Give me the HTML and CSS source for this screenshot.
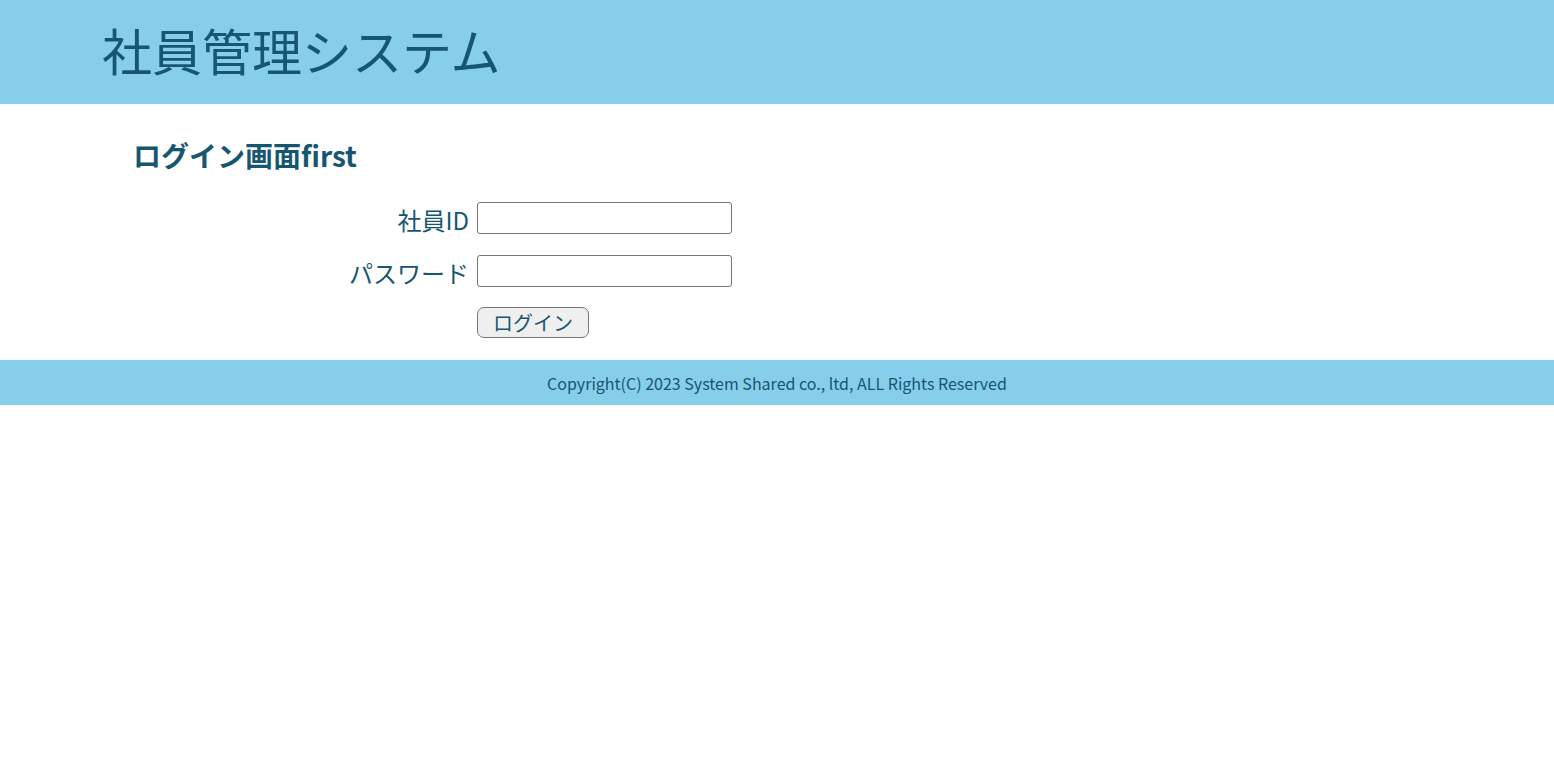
FILE: index.html
```html
<!DOCTYPE html>
<html lang="ja">
<head>
<meta charset="utf-8">
<title>社員管理システム</title>
<link rel="stylesheet" href="styles.css">
</head>
<body>
<header class="site-header">
  <h1 class="site-title">社員管理システム</h1>
</header>
<main class="main">
  <h2 class="page-title">ログイン画面first</h2>
  <form class="login-form">
    <label class="field-label" for="empId">社員ID</label>
    <input class="field-input" id="empId" type="text">
    <label class="field-label" for="pw">パスワード</label>
    <input class="field-input" id="pw" type="password">
    <span></span>
    <div class="actions"><button class="login-btn" type="button">ログイン</button></div>
  </form>
</main>
<footer class="site-footer">Copyright(C) 2023 System Shared co., ltd, ALL Rights Reserved</footer>
</body>
</html>
```
FILE: styles.css
```css
* { box-sizing: border-box; }
body {
  margin: 0;
  font-family: "Noto Sans CJK JP", "Noto Sans", sans-serif;
  color: #175670;
  background: #fff;
}
.site-header {
  background: #87ceeb;
  height: 104px;
  display: flex;
  align-items: center;
  padding-left: 102px;
  padding-bottom: 6px;
}
.site-title {
  margin: 0;
  font-size: 50px;
  font-weight: 400;
  line-height: 1.2;
}
.main {
  padding: 31px 0 22px 133px;
}
.page-title {
  margin: 0 0 27px;
  font-size: 28px;
  font-weight: 700;
  line-height: 40px;
}
.login-form {
  display: grid;
  grid-template-columns: 336px 255px;
  column-gap: 8px;
  row-gap: 21px;
  align-items: center;
}
.field-label {
  text-align: right;
  font-size: 24px;
  line-height: 28px;
  height: 32px;
  padding-top: 4px;
  white-space: nowrap;
}
.field-input {
  width: 255px;
  height: 32px;
  border: 1px solid #767676;
  border-radius: 3px;
  background: #fff;
  margin: 0;
}
.actions { display: flex; margin-top: -1px; }
.login-btn {
  width: 112px;
  height: 31px;
  font-family: "Noto Sans CJK JP", sans-serif;
  font-size: 20px;
  color: #175670;
  background: #efefef;
  border: 1px solid #767676;
  border-radius: 7px;
  padding: 0;
  line-height: 1;
}
.site-footer {
  background: #87ceeb;
  height: 45px;
  display: flex;
  align-items: center;
  justify-content: center;
  font-size: 16px;
}
```
